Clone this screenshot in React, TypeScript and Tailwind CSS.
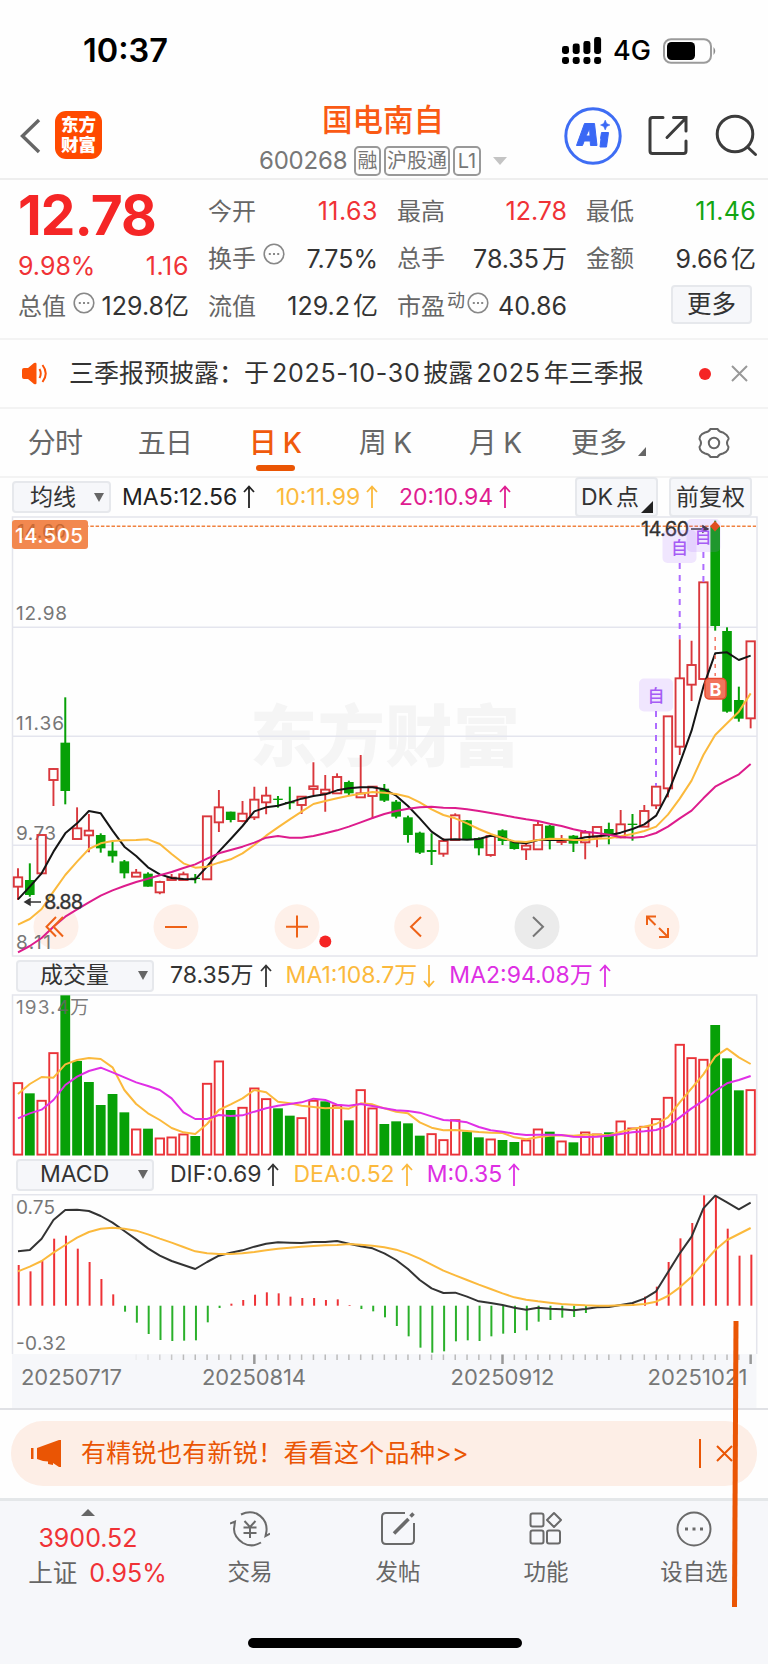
import type { ReactNode } from 'react';

const STEP = 11.817;
const FIRST_X = 18;
const UP = '#d9373c';
const VOL_UP = '#ea3338';
const DOWN = '#07a007';

type Candle = readonly [kind: 'r' | 'g', high: number, top: number, bottom: number, low: number];

// values are thirds of a pixel, measured down from the top of the price pane
const candles: Candle[] = [
  ['r', 1075, 1102, 1130, 1170], ['g', 1060, 1110, 1155, 1160], ['r', 975, 975, 1090, 1090],
  ['r', 775, 777, 810, 888], ['g', 562, 698, 843, 883], ['r', 892, 955, 987, 987],
  ['r', 912, 962, 976, 1027], ['g', 970, 975, 1015, 1028], ['g', 995, 1022, 1039, 1058],
  ['g', 1050, 1054, 1090, 1105], ['r', 1077, 1088, 1100, 1100], ['g', 1087, 1091, 1130, 1130],
  ['r', 1112, 1116, 1147, 1153], ['r', 1092, 1103, 1110, 1110], ['r', 1085, 1093, 1110, 1110],
  ['g', 1092, 1103, 1107, 1120], ['r', 919, 919, 1108, 1108], ['r', 840, 892, 937, 966],
  ['g', 905, 905, 930, 937], ['r', 873, 911, 933, 937], ['r', 830, 869, 922, 930],
  ['r', 830, 857, 877, 913], ['g', 858, 866, 870, 893], ['g', 830, 876, 880, 898],
  ['r', 858, 860, 885, 912], ['r', 757, 829, 837, 855], ['r', 795, 839, 850, 905],
  ['r', 790, 801, 850, 850], ['g', 812, 816, 850, 855], ['r', 735, 850, 862, 862],
  ['r', 830, 830, 858, 926], ['g', 822, 836, 872, 876], ['g', 870, 875, 920, 925],
  ['g', 917, 922, 975, 998], ['g', 965, 968, 1028, 1032], ['g', 970, 1020, 1026, 1065],
  ['r', 985, 993, 1031, 1040], ['r', 910, 916, 990, 990], ['g', 930, 931, 987, 990],
  ['g', 982, 984, 1015, 1036], ['r', 975, 978, 1035, 1040], ['g', 958, 961, 993, 1005],
  ['g', 993, 996, 1017, 1019], ['r', 1000, 1007, 1018, 1050], ['r', 935, 945, 1018, 1020],
  ['g', 945, 947, 988, 1018], ['r', 975, 992, 996, 1005], ['g', 975, 977, 1001, 1026],
  ['r', 960, 968, 997, 1048], ['r', 951, 951, 980, 1012], ['g', 938, 957, 977, 1003],
  ['r', 900, 943, 982, 985], ['g', 912, 941, 945, 992], ['r', 885, 903, 950, 950],
  ['r', 828, 830, 886, 897], ['r', 619, 619, 835, 862], ['r', 388, 505, 710, 735],
  ['r', 392, 465, 524, 573], ['r', 217, 217, 507, 510], ['g', 32, 50, 348, 362],
  ['g', 352, 363, 605, 608], ['g', 530, 570, 626, 635], ['r', 394, 394, 625, 655],
];

const ma5 = [1168, 1130, 1090, 1025, 970, 940, 903, 910, 962, 1010, 1038, 1072, 1093, 1104, 1107, 1108, 1070, 1025, 987, 948, 904, 892, 887, 877, 866, 858, 853, 841, 835, 832, 832, 838, 857, 888, 925, 965, 989, 988, 989, 987, 977, 982, 997, 1000, 990, 989, 990, 990, 982, 979, 976, 968, 957, 943, 917, 850, 760, 662, 530, 430, 427, 450, 437];
const ma10 = [1244, 1227, 1197, 1145, 1095, 1055, 1017, 1000, 993, 991, 990, 988, 1002, 1032, 1060, 1073, 1070, 1058, 1048, 1030, 1005, 977, 952, 928, 905, 882, 873, 865, 857, 851, 846, 848, 852, 860, 877, 898, 915, 925, 940, 957, 972, 984, 994, 996, 990, 986, 987, 990, 990, 986, 985, 979, 972, 963, 950, 914, 866, 812, 735, 675, 640, 605, 550];
const ma20 = [1327, 1308, 1284, 1250, 1220, 1198, 1177, 1157, 1141, 1128, 1116, 1106, 1096, 1086, 1074, 1063, 1046, 1030, 1020, 1010, 998, 983, 978, 983, 983, 978, 970, 961, 950, 937, 924, 912, 903, 896, 892, 890, 893, 894, 898, 903, 909, 915, 922, 928, 933, 941, 948, 958, 965, 969, 974, 981, 983, 980, 969, 950, 925, 902, 865, 830, 811, 793, 762];

const volumeKinds = 'rgrrggggggrgrrrgrrgrrrggrrgrgrrggggrrrggrggrrgrgrrgrrrrrrrrgggr';
const volumes = [367, 400, 420, 277, 106, 303, 366, 435, 402, 457, 506, 506, 533, 530, 521, 528, 369, 302, 450, 441, 383, 415, 445, 467, 472, 420, 424, 434, 481, 388, 443, 492, 484, 490, 527, 520, 538, 478, 515, 532, 536, 540, 546, 539, 506, 515, 542, 547, 515, 521, 517, 482, 503, 498, 475, 411, 252, 292, 297, 195, 295, 391, 388];
const volMa1 = [402, 372, 351, 353, 313, 300, 294, 297, 322, 390, 432, 460, 480, 504, 517, 522, 492, 450, 433, 415, 390, 397, 425, 430, 437, 441, 445, 443, 446, 430, 433, 445, 455, 460, 487, 503, 511, 510, 513, 516, 518, 519, 532, 538, 532, 527, 526, 527, 524, 524, 526, 516, 507, 500, 492, 472, 427, 385, 343, 290, 266, 292, 312];
const volMa2 = [475, 460, 449, 420, 375, 350, 333, 323, 337, 352, 367, 378, 390, 415, 457, 477, 477, 465, 468, 466, 455, 445, 437, 432, 427, 416, 420, 434, 437, 432, 438, 445, 451, 453, 458, 469, 480, 482, 487, 501, 511, 515, 521, 525, 524, 524, 525, 530, 531, 530, 527, 522, 517, 514, 510, 498, 472, 445, 422, 393, 370, 360, 348];

const macd = [315, 334, 303, 236, 227, 266, 306, 357, 403, 455, 488, 522, 540, 543, 542, 541, 487, 444, 431, 420, 404, 397, 400, 410, 414, 414, 420, 418, 435, 447, 454, 472, 498, 529, 563, 578, 574, 544, 541, 543, 529, 521, 519, 511, 485, 480, 473, 471, 459, 441, 438, 436, 427, 410, 380, 306, 235, 189, 106, 108, 206, 287, 284];
const dif = [274, 270, 236, 180, 150, 149, 153, 168, 188, 213, 238, 265, 287, 303, 315, 327, 306, 287, 278, 271, 260, 251, 247, 248, 249, 246, 246, 243, 251, 259, 265, 280, 300, 327, 360, 385, 399, 398, 410, 424, 429, 435, 443, 449, 443, 446, 448, 451, 447, 442, 441, 435, 429, 416, 394, 337, 280, 230, 145, 107, 127, 148, 128];
const dea = [334, 320, 303, 278, 255, 233, 216, 206, 203, 206, 212, 223, 236, 248, 261, 274, 280, 282, 282, 280, 276, 271, 266, 263, 260, 258, 256, 255, 252, 254, 257, 262, 269, 281, 296, 314, 332, 346, 360, 374, 387, 400, 412, 419, 424, 428, 432, 434, 436, 437, 437, 436, 435, 432, 425, 408, 382, 350, 310, 270, 240, 222, 204];

const cx = (i: number) => FIRST_X + i * STEP;

export default function App() {
  return (
    <div className="relative flex h-[1664px] w-[768px] flex-col overflow-hidden whitespace-nowrap bg-[#fefefe] font-['Inter','Noto_Sans_CJK_SC',sans-serif] text-[#333]">
      <StatusBar />
      <Header />
      <Quote />
      <Notice />
      <Tabs />
      <IndicatorBar />
      <PriceChart />
      <PaneBar
        className="h-[37px]"
        name="成交量"
        items={[
          ['78.35万', 'up', 'text-[#333]'],
          ['MA1:108.7万', 'down', 'text-[#fbb93c]'],
          ['MA2:94.08万', 'up', 'text-[#dd2fe3]'],
        ]}
      />
      <VolumeChart />
      <PaneBar
        className="h-[38px] pb-[1px]"
        name="MACD"
        items={[
          ['DIF:0.69', 'up', 'text-[#333]'],
          ['DEA:0.52', 'up', 'text-[#fbb93c]'],
          ['M:0.35', 'up', 'text-[#dd2fe3]'],
        ]}
      />
      <MacdChart />
      <Banner />
      <BottomNav />
      <svg className="absolute left-[730px] top-[1321px]" width="12" height="286">
        <path d="M3.5 0H8.5L7 286H2Z" fill="#ea5504" />
      </svg>
    </div>
  );
}

function StatusBar() {
  return (
    <div className="flex h-[101px] shrink-0 items-center pl-[83px] text-black">
      <span className="w-[479px] pt-[1px] text-[32.5px] font-semibold">10:37</span>
      <svg width="40" height="28" viewBox="0 0 40 28" fill="#000">
        {[9, 6.5, 4, 0].map((y, i) => (
          <rect key={y} x={i * 10.7} y={y} width="7" height={17 - y} rx="2.4" />
        ))}
        {[0, 1, 2, 3].map((i) => (
          <rect key={i} x={i * 10.7} y="20" width="7" height="7" rx="2.4" />
        ))}
      </svg>
      <span className="ml-[11px] w-[50px] pt-[2px] text-[27px] font-medium">4G</span>
      <svg width="54" height="26" viewBox="0 0 54 26">
        <rect x="1" y="1.2" width="47" height="23.6" rx="7" fill="none" stroke="#9b9b9b" strokeWidth="2" />
        <rect x="4" y="4" width="28" height="18" rx="4.5" fill="#000" />
        <path d="M50.5 9Q54 13 50.5 17Z" fill="#8b8b8b" />
      </svg>
    </div>
  );
}

function Header() {
  return (
    <header className="flex h-[79px] shrink-0 items-start border-b-2 border-[#eee] pl-[19px]">
      <svg className="mt-[17px]" width="22" height="36" viewBox="0 0 22 36" fill="none" stroke="#666" strokeWidth="3.4">
        <path d="M20 2L3.5 18L20 34" />
      </svg>
      <div className="ml-[14px] mt-[10px] flex h-[48px] w-[47px] flex-col items-center justify-center rounded-[11px] bg-[#ff4a00] text-[17.5px] font-black leading-[20px] text-white">
        <span>东方</span>
        <span>财富</span>
      </div>
      <div className="ml-[132px] flex w-[306px] flex-col items-center">
        <h1 className="h-[37px] pr-[8px] text-[30.5px] font-medium leading-[37px] text-[#fa5a14]">国电南自</h1>
        <div className="mt-[7px] flex h-[31px] items-center self-start pl-[25px] text-[#777]">
          <span className="w-[95px] text-[24px] tracking-[-0.2px]">600268</span>
          <Badge className="w-[27px]">融</Badge>
          <Badge className="ml-[3px] w-[66px]">沪股通</Badge>
          <Badge className="ml-[3px] w-[28px]">L1</Badge>
          <svg className="ml-[12px]" width="14" height="8">
            <path d="M0 0H14L7 8Z" fill="#c4c4c4" />
          </svg>
        </div>
      </div>
      <svg className="ml-[24px] mt-[6px]" width="58" height="58" viewBox="0 0 58 58">
        <circle cx="29" cy="29" r="27.2" fill="none" stroke="#3e6df4" strokeWidth="3" />
        <g fill="#3a68f5" stroke="#3a68f5" strokeLinejoin="round">
          <path fillRule="evenodd" d="M12.500 38.500L20.500 16.500H30.500L33 38.500H26.500L26.200 34H20.200L18.500 38.500ZM22 29H26L25.600 21.500Z" />
          <path d="M37.500 25.500H44.500L42.500 40H36L37 31.500H36.500Z" />
          <path d="M41.200 13L42.700 16.500L46 18L42.700 19.500L41.200 23L39.700 19.500L36.500 18L39.700 16.500Z" strokeWidth="0.500" />
        </g>
      </svg>
      <svg className="ml-[26px] mt-[14px]" width="42" height="42" viewBox="0 0 42 42" fill="none" stroke="#3c3c3c" strokeWidth="3" strokeLinecap="round">
        <path d="M15 2.500H4.500Q2 2.500 2 5V36Q2 38.500 4.500 38.500H35.500Q38 38.500 38 36V26M25.500 2.500H38V16M37 4L19 22.500" />
      </svg>
      <svg className="ml-[25px] mt-[12px]" width="44" height="46" viewBox="0 0 44 46" fill="none" stroke="#3c3c3c" strokeWidth="3" strokeLinecap="round">
        <circle cx="20" cy="21" r="17.800" />
        <path d="M32.500 34L40.500 41.500" />
      </svg>
    </header>
  );
}

function Badge({ className, children }: { className: string; children: ReactNode }) {
  return (
    <span className={`flex h-[30px] items-center justify-center rounded-[5px] border-2 border-[#999] text-[20px] text-[#777] ${className}`}>
      {children}
    </span>
  );
}

function Dots() {
  return (
    <svg className="shrink-0" width="22" height="22" viewBox="0 0 22 22">
      <circle cx="11" cy="11" r="9.8" fill="none" stroke="#888" strokeWidth="1.6" />
      <path d="M5.8 11h2M10 11h2M14.2 11h2" stroke="#888" strokeWidth="2" />
    </svg>
  );
}

type StatProps = { label: string; value: string; unit?: string; color?: string; extra?: ReactNode };

function Stat({ label, value, unit, color = 'text-[#333]', extra }: StatProps) {
  return (
    <div className="flex h-[47.500px] items-center">
      <span className="text-[24px] text-[#666]">{label}</span>
      {extra}
      <span className={`ml-auto text-[25px] ${color}`}>
        {value}
        {unit && <span className="ml-[3px]">{unit}</span>}
      </span>
    </div>
  );
}

function Quote() {
  return (
    <section className="flex h-[160px] shrink-0 border-b-2 border-[#f3f3f3] pl-[18px]">
      <div className="w-[171px]">
        <div className="mt-[7px] h-[56px] text-[55px] font-bold leading-[56px] tracking-[-0.9px] text-[#f52626]">12.78</div>
        <div className="mt-[8px] flex h-[32px] items-center justify-between text-[25px] text-[#f03236]">
          <span>9.98%</span>
          <span className="tracking-[0.6px]">1.16</span>
        </div>
        <Stat label="总值" value="129.8亿" extra={<span className="-mt-2 ml-[7px]"><Dots /></span>} />
      </div>
      <div className="ml-[19px] mt-[8px] w-[170px]">
        <Stat label="今开" value="11.63" color="tracking-[0.5px] text-[#f03236]" />
        <Stat label="换手" value="7.75%" extra={<span className="-mt-2.5 ml-[7px]"><Dots /></span>} />
        <Stat label="流值" value="129.2" unit="亿" />
      </div>
      <div className="ml-[19px] mt-[8px] w-[170px]">
        <Stat label="最高" value="12.78" color="text-[#f03236]" />
        <Stat label="总手" value="78.35" unit="万" />
        <Stat
          label="市盈"
          value="40.86"
          extra={
            <span className="-mt-2 ml-[2px] flex items-center text-[18px] text-[#666]">
              <span className="-mt-1 mr-[2px]">动</span>
              <Dots />
            </span>
          }
        />
      </div>
      <div className="ml-[19px] mt-[8px] w-[170px]">
        <Stat label="最低" value="11.46" color="tracking-[0.3px] text-[#12a512]" />
        <Stat label="金额" value="9.66" unit="亿" />
        <button className="ml-[85px] mt-[2px] flex h-[39px] w-[81px] items-center justify-center rounded-[4px] border-2 border-[#e6e8ec] bg-[#f6f7fa] text-[24.500px]">
          更多
        </button>
      </div>
    </section>
  );
}

function Notice() {
  return (
    <section className="flex h-[69px] shrink-0 items-center border-b-2 border-[#f3f3f3] pl-[22px]">
      <svg width="28" height="24" viewBox="0 0 28 24">
        <path d="M0 8Q0 6 2 6H6L12 1Q14.500 0 14.500 2V21Q14.500 23 12 22L6 17H2Q0 17 0 15Z" fill="#fc5207" />
        <path d="M17.500 7Q20 11.500 17.500 16M20.500 3Q27 11.500 20.500 20" fill="none" stroke="#fc5207" strokeWidth="2" />
      </svg>
      <span className="ml-[19px] w-[630px] text-[25px]">
        三季报预披露：于<span className="mx-[3px] tracking-[0.7px]">2025-10-30</span>披露
        <span className="mx-[3px] tracking-[0.7px]">2025</span>年三季报
      </span>
      <span className="size-[12px] rounded-full bg-[#f52424]" />
      <svg className="ml-[20px]" width="17" height="17" stroke="#999" strokeWidth="2">
        <path d="M1 1L16 16M16 1L1 16" />
      </svg>
    </section>
  );
}

function Tabs() {
  const tabs = ['分时', '五日', '日 K', '周 K', '月 K'];
  return (
    <nav className="flex h-[69px] shrink-0 items-start border-b-2 border-[#f3f3f3] text-[28px] text-[#666]">
      {tabs.map((tab) => (
        <div
          key={tab}
          className={`mt-[14px] flex w-[110px] flex-col items-center ${tab === '日 K' ? 'font-medium text-[#f05a0c]' : ''}`}
        >
          <span className="leading-[40px] tracking-[-0.7px]">{tab}</span>
          {tab === '日 K' && <span className="mt-[2px] h-[6px] w-[39px] rounded-[3px] bg-[#ea5504]" />}
        </div>
      ))}
      <div className="ml-[21px] mt-[14px] flex w-[127px] items-end leading-[40px]">
        更多
        <svg className="mb-[7px] ml-[11px]" width="8" height="9">
          <path d="M8 0V9H0Z" fill="#666" />
        </svg>
      </div>
      <svg className="mt-[18px]" width="32" height="32" viewBox="0 0 32 32" fill="none" stroke="#666" strokeWidth="2">
        <path d="M12.500 2H19.500Q21 5 25 5.500L28.500 8Q31 11 30.500 12Q27.500 16 30.500 20Q30.500 23 28 25L25 26.500Q21 27 19.500 30H12.500Q11 27 7 26.500L4 25Q1.500 23 1.500 20Q4.500 16 1.500 12Q1.500 9 4 7L7 5.500Q11 5 12.500 2Z" />
        <circle cx="16" cy="16" r="5.200" />
      </svg>
    </nav>
  );
}

function Arrow({ down = false }: { down?: boolean }) {
  return (
    <svg className={`ml-[6px] shrink-0 ${down ? 'rotate-180' : ''}`} width="12" height="24" viewBox="0 0 12 24" fill="none" stroke="currentColor" strokeWidth="1.8">
      <path d="M6 23V2M1 7L6 1.500L11 7" />
    </svg>
  );
}

function Caret() {
  return (
    <svg width="10" height="9">
      <path d="M0 0H10L5 9Z" fill="#666" />
    </svg>
  );
}

function IndicatorBar() {
  return (
    <div className="flex h-[38px] shrink-0 items-center pl-[12px] text-[23px]">
      <div className="flex h-[32px] w-[99px] items-center justify-between rounded-[4px] border-2 border-[#e6e8ec] bg-[#f6f7fa] pl-[16px] pr-[5px]">
        均线
        <Caret />
      </div>
      <span className="ml-[11px] flex w-[154px] items-center text-[#222]">
        MA5:12.56
        <Arrow />
      </span>
      <span className="flex w-[123px] items-center text-[#fbb93c]">
        10:11.99
        <Arrow />
      </span>
      <span className="flex w-[176px] items-center text-[#df1c90]">
        20:10.94
        <Arrow />
      </span>
      <div className="relative flex h-[40px] w-[83px] items-center rounded-[4px] border-2 border-[#e6e8ec] bg-[#f6f7fa] pl-[4px]">
        DK<span className="ml-[3px]">点</span>
        <svg className="absolute bottom-[2px] right-[3px]" width="12" height="12">
          <path d="M12 0V12H0Z" fill="#222" />
        </svg>
      </div>
      <div className="ml-[11px] flex h-[40px] w-[83px] items-center justify-center rounded-[4px] border-2 border-[#e6e8ec] bg-[#f6f7fa]">
        前复权
      </div>
    </div>
  );
}

type PaneItem = readonly [text: string, dir: 'up' | 'down', color: string];

function PaneBar({ name, items, className }: { name: string; items: PaneItem[]; className: string }) {
  return (
    <div className={`flex shrink-0 items-center pl-[16px] text-[23px] ${className}`}>
      <div className="mr-[16px] flex h-[32px] w-[138px] items-center justify-between rounded-[4px] border-2 border-[#e6e8ec] bg-[#f6f7fa] pl-[22px] pr-[4px]">
        {name}
        <Caret />
      </div>
      {items.map(([text, dir, color]) => (
        <span key={text} className={`mr-[14px] flex items-center ${color}`}>
          {text}
          <Arrow down={dir === 'down'} />
        </span>
      ))}
    </div>
  );
}

type LineProps = { data: number[]; base: number; color: string };

function Line({ data, base, color }: LineProps) {
  const points = data.map((v, i) => `${cx(i)},${base + v / 3}`).join(' ');
  return <polyline points={points} fill="none" stroke={color} strokeWidth="2" strokeLinejoin="round" />;
}

function PriceChart() {
  const y = (v: number) => 510 + v / 3;
  return (
    <svg className="shrink-0" width="768" height="441" viewBox="0 516 768 441">
      <g fontSize="67" fontWeight="900" fill="#f5f5f5">
        <text x="250" y="761" textLength="270">东方财富</text>
      </g>
      <rect x="12.500" y="517" width="744.500" height="439" fill="none" stroke="#e4e5ec" strokeWidth="1.500" />
      <path d="M12 627.300H757M12 736.300H757M12 845.300H757" stroke="#e4e5ee" strokeWidth="1.600" />
      {[56, 176, 297, 416.7, 537, 657].map((x) => (
        <circle key={x} cx={x} cy="926.700" r="22.500" fill={x === 537 ? '#ebebeb' : '#fef0e9'} />
      ))}
      <g fontSize="19" fill="#777">
        <text x="16" y="620" textLength="51">12.98</text>
        <text x="16" y="730" textLength="48">11.36</text>
        <text x="16" y="839.500" textLength="40">9.73</text>
        <text x="16" y="948.500" textLength="35">8.11</text>
      </g>
      {candles.map(([kind, high, top, bottom, low], i) => {
        const x = cx(i);
        if (kind === 'g') {
          return (
            <g key={i} fill={DOWN}>
              <rect x={x - 1} y={y(high)} width="2" height={(low - high) / 3} />
              <rect x={x - 4.800} y={y(top)} width="9.600" height={(bottom - top) / 3} />
            </g>
          );
        }
        return (
          <g key={i} stroke={UP} strokeWidth="1.900" fill="none">
            <path d={`M${x} ${y(high)}V${y(top)}M${x} ${y(bottom)}V${y(low)}`} />
            <rect x={x - 4.200} y={y(top)} width="8.400" height={(bottom - top) / 3} />
          </g>
        );
      })}
      <Line data={ma5} base={510} color="#151515" />
      <Line data={ma10} base={510} color="#fbb93c" />
      <Line data={ma20} base={510} color="#dd1c8c" />
      <path d="M85 526.300H756" stroke="#f0813f" strokeWidth="1.600" strokeDasharray="3.500 1.800" />
      <rect x="12" y="520" width="76" height="29" rx="3" fill="#f2884f" />
      <text x="17" y="538" fontSize="19" fill="#c96a35" textLength="49">14.60</text>
      <text x="15" y="542.500" fontSize="20.500" fontWeight="500" fill="#fff" textLength="68">14.505</text>
      <g fontSize="20" fill="#333" stroke="#333" strokeWidth="0.300">
        <text x="44" y="909" textLength="39">8.88</text>
        <text x="641" y="535.500" textLength="48">14.60</text>
      </g>
      <path d="M41 902H27M30 899L25 902L30 905ZM691 529H705M703 526L708 529L703 532Z" stroke="#333" strokeWidth="1.500" fill="#333" />
      <g fill="#a968ff" fillOpacity="0.160">
        <rect x="639" y="678.500" width="34" height="33" rx="5" />
        <rect x="662.500" y="530" width="34" height="33" rx="5" />
        <rect x="686.500" y="519" width="34" height="33" rx="5" />
      </g>
      <g fontSize="17" fontWeight="500" fill="#a65cf5" textAnchor="middle">
        <text x="656" y="702">自</text>
        <text x="679.500" y="554">自</text>
        <text x="703" y="543">自</text>
      </g>
      <path d="M656 711V786M679.700 563V639M703.400 552V582" stroke="#ae6cff" strokeWidth="2" strokeDasharray="6 6" />
      <path d="M715.200 637V676" stroke="#f47a68" strokeWidth="1.600" strokeDasharray="4 5" />
      <path d="M715 521L720 526.300L715 531.500L710 526.300Z" fill="#e04f1e" />
      <rect x="705" y="678.500" width="21" height="20.500" rx="4" fill="#f2755c" stroke="#ea4b30" strokeWidth="1.500" />
      <text x="715.500" y="695.500" fontSize="18" fontWeight="700" fill="#fff" textAnchor="middle">B</text>
      <g fill="none" stroke="#ee6217" strokeWidth="2">
        <path d="M56 917L46.500 926.700L56 936.500M63 917L53.500 926.700L63 936.500" />
        <path d="M165 927H187M286 926.700H308M297 915.500V937.500" />
        <path d="M421 917L411 926.700L421 936.500" />
        <path d="M656 916.500H647V925M647.500 917L655.500 925M668 928V937H659M667.500 936.500L659 928" />
      </g>
      <path d="M533 917L543 926.700L533 936.500" fill="none" stroke="#777" strokeWidth="2" />
      <circle cx="325.300" cy="941.500" r="6" fill="#f52424" />
    </svg>
  );
}

function VolumeChart() {
  return (
    <svg className="shrink-0" width="768" height="162" viewBox="0 994 768 162">
      <path d="M12.500 1155V995H756.700V1155" fill="none" stroke="#e4e5ec" strokeWidth="1.500" />
      {volumes.map((v, i) => {
        const up = volumeKinds[i] === 'r';
        const top = 960 + v / 3;
        return up ? (
          <rect key={i} x={cx(i) - 4.200} y={top + 0.800} width="8.400" height={1153.800 - top} fill="#fff" stroke={VOL_UP} strokeWidth="1.900" />
        ) : (
          <rect key={i} x={cx(i) - 4.900} y={top} width="9.800" height={1155.500 - top} fill={DOWN} />
        );
      })}
      <text x="16" y="1014" fontSize="19" fill="#666" fillOpacity="0.850" textLength="73">193.4万</text>
      <Line data={volMa1} base={960} color="#fbb93c" />
      <Line data={volMa2} base={960} color="#e02fe6" />
    </svg>
  );
}

function MacdChart() {
  const zero = 1305.700;
  return (
    <svg className="shrink-0" width="768" height="216" viewBox="0 1194 768 216">
      <rect x="12" y="1354" width="744.500" height="54" fill="#f6f7fa" />
      <path d="M12.500 1354V1194.700H756.700V1354" fill="none" stroke="#e4e5ec" strokeWidth="1.500" />
      {macd.map((v, i) => (
        <path key={i} d={`M${cx(i) + 0.700} ${zero}V${1160 + v / 3}`} stroke={v < 437 ? '#ee3236' : '#2ab02a'} strokeWidth="2" />
      ))}
      <Line data={dif} base={1160} color="#333" />
      <Line data={dea} base={1160} color="#fbb93c" />
      {macd.slice(10).map((_, n) => {
        const i = n + 10;
        const major = i === 20 || i === 41 || i === 62;
        return (
          <path
            key={i}
            d={`M${cx(i)} 1354.500V${major ? 1364 : 1360}`}
            stroke={major ? '#999' : '#bbb'}
            strokeOpacity={Math.min(1, 0.150 + n * 0.220)}
            strokeWidth={major ? 2.500 : 1.500}
          />
        );
      })}
      <g fontSize="19" fill="#777">
        <text x="16" y="1213.500" textLength="39">0.75</text>
        <text x="16" y="1349.500" textLength="50">-0.32</text>
      </g>
      <g fontSize="22" fill="#777">
        <text x="21" y="1385" textLength="101">20250717</text>
        <text x="202" y="1385" textLength="104">20250814</text>
        <text x="450.500" y="1385" textLength="104">20250912</text>
        <text x="647.500" y="1385" textLength="100">20251021</text>
      </g>
      <path d="M0 1409H768" stroke="#e0e1e5" strokeWidth="2" />
    </svg>
  );
}

function Banner() {
  return (
    <div className="mx-[11px] mb-[12px] mt-[11px] flex h-[65px] shrink-0 items-center rounded-[32px] bg-[#fdeee6] pl-[20px] text-[25px] text-[#ea5504]">
      <svg width="31" height="27" viewBox="0 0 31 27" fill="#ea5504">
        <path d="M0 8H2.500V19H0ZM6 8L28 0H30V27H28L22 23V25L17 24V21.500L12 21L9 20L6 19Z" />
      </svg>
      <span className="ml-[19px] w-[618px] tracking-[0.300px]">有精锐也有新锐！看看这个品种&gt;&gt;</span>
      <span className="h-[29px] w-[2px] bg-[#ea5504]" />
      <svg className="ml-[15px]" width="17" height="17" stroke="#ea5504" strokeWidth="2">
        <path d="M1 1L16 16M16 1L1 16" />
      </svg>
    </div>
  );
}

function NavItem({ label, children }: { label: string; children: ReactNode }) {
  return (
    <div className="flex w-[148px] flex-col items-center text-[22.500px] text-[#666]">
      <svg className="mt-[8px]" width="40" height="40" viewBox="0 0 40 40" fill="none" stroke="#6a6a6a" strokeWidth="2">
        {children}
      </svg>
      <span className="mt-[6px] leading-[34px]">{label}</span>
    </div>
  );
}

function BottomNav() {
  return (
    <footer className="relative flex h-[166px] shrink-0 border-t-[3px] border-[#e4e7e9] bg-[#f6f7fa]">
      <div className="flex w-[176px] flex-col items-center text-[#f03236]">
        <svg className="mt-[8px]" width="14" height="7">
          <path d="M0 7H14L7 0Z" fill="#666" />
        </svg>
        <span className="mt-[5px] text-[25px] leading-[35px]">3900.52</span>
        <span className="pl-[19px] text-[25px] leading-[35px]">
          <span className="mr-[12px] text-[24.500px] text-[#666]">上证</span>0.95%
        </span>
      </div>
      <NavItem label="交易">
        <path d="M11 5.500Q19 1.500 26.500 4.500Q37.500 10.500 36.500 22L35.500 27L40 24.500M31 33.500Q22 39 13 34Q4 28 4 20L5 12.500L0 14.500" />
        <path d="M14.500 12L20 18L25.500 12M20 18V29M13.500 18.500H26.500M13.500 24H26.500" />
      </NavItem>
      <NavItem label="发帖">
        <path d="M27 4H8Q4 4 4 8V31Q4 35 8 35H32Q36 35 36 31V14" />
        <path d="M16 24.500L30.500 10" strokeWidth="3.600" />
        <path d="M32.500 7.500L35.500 4.500" strokeWidth="3.500" />
      </NavItem>
      <NavItem label="功能">
        <rect x="4.500" y="4.500" width="13" height="13" rx="2" />
        <rect x="4.500" y="21.500" width="13" height="13" rx="2" />
        <rect x="21" y="21.500" width="13" height="13" rx="2" />
        <path d="M28 4L35 11L28 18L21 11Z" strokeLinejoin="round" />
      </NavItem>
      <NavItem label="设自选">
        <circle cx="20" cy="20" r="16.500" />
        <path d="M11 20h3M18.500 20h3M26 20h3" strokeWidth="3" />
      </NavItem>
      <div className="absolute bottom-[16px] left-[248px] h-[10px] w-[274px] rounded-full bg-black" />
    </footer>
  );
}
